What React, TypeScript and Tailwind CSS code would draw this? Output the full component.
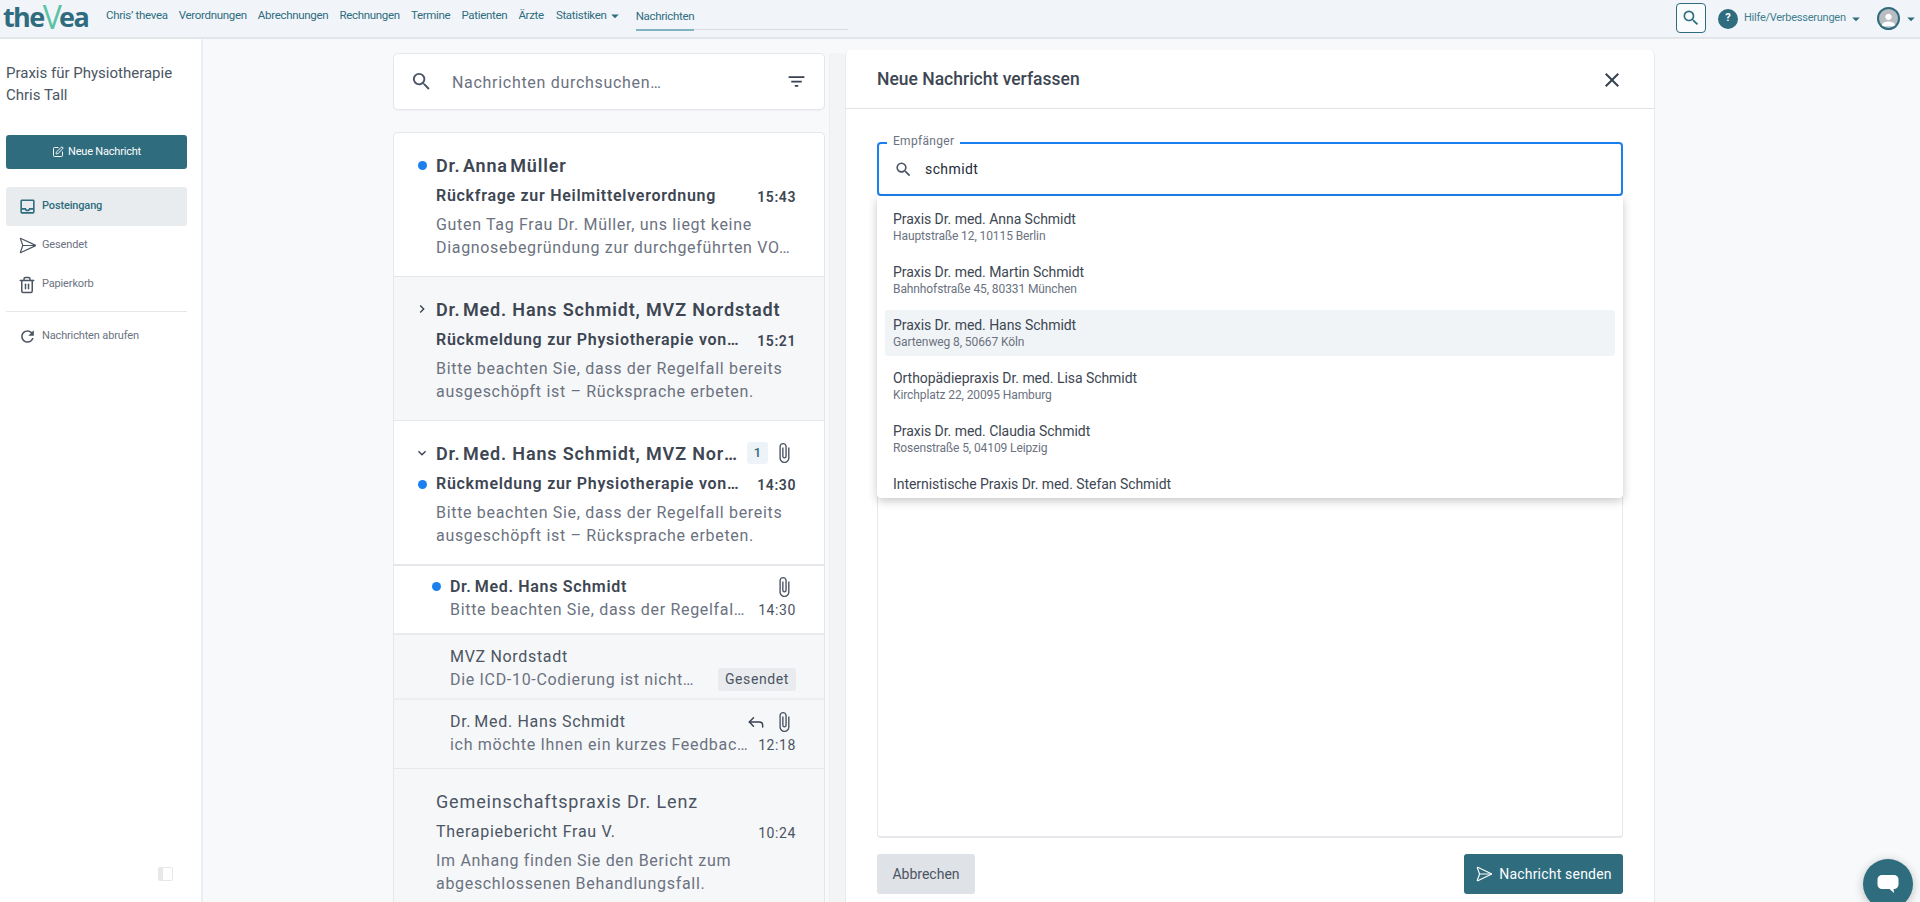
import React from "react";
import {
  MdSearch,
  MdFilterList,
  MdClose,
  MdAttachFile,
  MdOutlineInbox,
  MdKeyboardArrowDown,
  MdKeyboardArrowRight,
  MdArrowDropDown,
  MdRefresh,
  MdPerson,
} from "react-icons/md";
import { Reply, SendHorizontal, SquarePen, Trash2 } from "lucide-react";

const navItems = ["Chris’ thevea", "Verordnungen", "Abrechnungen", "Rechnungen", "Termine", "Patienten", "Ärzte"];

const recipients = [
  { name: "Praxis Dr. med. Anna Schmidt", address: "Hauptstraße 12, 10115 Berlin" },
  { name: "Praxis Dr. med. Martin Schmidt", address: "Bahnhofstraße 45, 80331 München" },
  { name: "Praxis Dr. med. Hans Schmidt", address: "Gartenweg 8, 50667 Köln", active: true },
  { name: "Orthopädiepraxis Dr. med. Lisa Schmidt", address: "Kirchplatz 22, 20095 Hamburg" },
  { name: "Praxis Dr. med. Claudia Schmidt", address: "Rosenstraße 5, 04109 Leipzig" },
  { name: "Internistische Praxis Dr. med. Stefan Schmidt" },
];

const Dot = () => <span className="block w-[9px] h-[9px] rounded-full bg-[#1a7fef] mx-auto" />;

const Clip = () => <MdAttachFile className="text-[22px] text-[#4b5563]" />;

const DrMed = () => <span className="[word-spacing:-3px]">Dr. Med.</span>;
const DrMedSmall = () => <span className="[word-spacing:-1.5px]">Dr. Med.</span>;

type ThreadProps = {
  lead?: React.ReactNode;
  subLead?: React.ReactNode;
  name: React.ReactNode;
  nameExtra?: React.ReactNode;
  subject: string;
  time: string;
  body: React.ReactNode;
  read?: boolean;
  className?: string;
};

const Thread = ({ lead, subLead, name, nameExtra, subject, time, body, read, className }: ThreadProps) => (
  <div className={`pt-5 pb-[17px] pr-7 border-b border-[#e5e7eb] ${className ?? ""}`}>
    <div className="flex items-center h-6">
      <div className="w-[42px] pl-5 shrink-0">
        <div className="w-4">{lead}</div>
      </div>
      <div
        className={`flex-1 min-w-0 truncate text-[18px] tracking-[0.85px] ${
          read ? "font-normal text-[#4b5563]" : "font-semibold text-[#3d4652]"
        }`}
      >
        {name}
      </div>
      {nameExtra}
    </div>
    <div className="flex items-center h-6 mt-[7px]">
      <div className="w-[42px] pl-5 shrink-0">
        <div className="w-4">{subLead}</div>
      </div>
      <div
        className={`flex-1 min-w-0 truncate text-[16px] tracking-[0.72px] ${
          read ? "font-normal text-[#4b5563]" : "font-semibold text-[#3d4652]"
        }`}
      >
        {subject}
      </div>
      <div
        className={`ml-4 text-[14px] tracking-[0.6px] mt-[3px] ${
          read ? "font-normal text-[#4b5563]" : "font-semibold text-[#3d4652]"
        }`}
      >
        {time}
      </div>
    </div>
    <div className="pl-[42px] mt-[5px] text-[16px] leading-[23px] tracking-[0.68px] text-[#6b7280]">{body}</div>
  </div>
);

type SubRowProps = {
  dot?: boolean;
  name: React.ReactNode;
  text: string;
  right: React.ReactNode;
  topRight?: React.ReactNode;
  className: string;
};

const SubRow = ({ dot, name, text, right, topRight, className }: SubRowProps) => (
  <div className={`pr-7 ${className}`}>
    <div className="flex items-center h-[23px]">
      <div className="w-[56px] pl-[34px] shrink-0">
        <div className="w-4">{dot && <Dot />}</div>
      </div>
      <div
        className={`flex-1 min-w-0 truncate text-[16px] tracking-[0.68px] ${
          dot ? "font-semibold text-[#3d4652]" : "text-[#4b5563]"
        }`}
      >
        {name}
      </div>
      {topRight}
    </div>
    <div className="flex items-center h-[23px]">
      <div className="flex-1 min-w-0 pl-[56px] truncate text-[16px] tracking-[0.68px] text-[#6b7280]">{text}</div>
      {right}
    </div>
  </div>
);

const App: React.FC = () => {
  return (
    <div className="h-[902px] overflow-hidden flex flex-col bg-[#f8f9fb] font-['Roboto',sans-serif] text-[#374151]">
      {/* top bar */}
      <header className="relative z-10 h-[39px] shrink-0 flex items-center bg-[#f1f5f9] border-b-2 border-[#e2e5e9] text-[#2e6c7e]">
        <div className="w-[106px] pl-[3px] shrink-0 flex items-center h-full font-['Open_Sans',sans-serif] font-bold text-[27px] tracking-[-1.6px] leading-none text-[#2e6c7e] pb-1">
          the<span className="text-[#5cc2a6] font-normal text-[32px] -mx-px">V</span>ea
        </div>
        <nav className="flex items-start h-full text-[11.5px] tracking-[-0.3px]">
          <div className="flex items-center gap-[11px] h-[30px] pt-[1px]">
            {navItems.map((item) => (
              <span key={item}>{item}</span>
            ))}
          </div>
          <div className="flex items-center ml-3 h-[38px] pt-px pb-[7px]">
            Statistiken
            <MdArrowDropDown className="text-[18px] -ml-px" />
          </div>
          <div className="flex items-center ml-[12px] h-[31px] pt-1 border-b-2 border-[#7fb4c0]">Nachrichten</div>
          <div className="w-[154px] h-[30px] border-b border-[#d9dde1]" />
        </nav>
        <div className="ml-auto flex items-center">
          <button className="w-[30px] h-[30px] flex items-center justify-center rounded-[4px] border border-[#2e6c7e] bg-white/60 mt-[-2px]">
            <MdSearch className="text-[20px]" />
          </button>
          <span className="ml-[12px] w-[20px] h-[20px] rounded-full bg-[#2e6c7e] text-white text-[11px] font-bold flex items-center justify-center">
            ?
          </span>
          <span className="ml-[6px] w-[103px] text-[11px] tracking-[-0.25px] text-[#3f7e8f] whitespace-nowrap">
            Hilfe/Verbesserungen
          </span>
          <MdArrowDropDown className="text-[18px]" />
          <span className="ml-[12px] w-[23px] h-[23px] rounded-full border-2 border-[#2e6c7e] bg-[#b9bdc2] flex items-end justify-center overflow-hidden">
            <MdPerson className="text-[20px] text-white translate-y-[2px]" />
          </span>
          <MdArrowDropDown className="ml-[2px] text-[18px]" />
        </div>
      </header>

      <div className="flex-1 min-h-0 flex">
        {/* sidebar */}
        <aside className="w-[203px] shrink-0 flex flex-col bg-white border-r-2 border-[#eceef1] pl-[6px] pr-[14px]">
          <div className="mt-[23px] text-[15px] leading-[22px] text-[#4b5563]">
            Praxis für Physiotherapie
            <br />
            Chris Tall
          </div>
          <button className="mt-[29px] h-[34px] rounded-[3px] bg-[#2e6c7e] text-white text-[11px] flex items-center justify-center gap-1 tracking-[-0.2px]">
            <SquarePen size={12} />
            Neue Nachricht
          </button>
          <div className="mt-[18px] h-[39px] rounded-[3px] bg-[#e9ecef] flex items-center pl-[12px] gap-[5px] text-[11px] tracking-[-0.15px] font-medium text-[#2e6c7e]">
            <MdOutlineInbox className="text-[19px]" />
            Posteingang
          </div>
          <div className="h-[39px] flex items-center pl-[12px] gap-[5px] text-[11px] tracking-[-0.15px] text-[#6b7280]">
            <SendHorizontal size={19} strokeWidth={1.5} className="text-[#4b5563]" />
            Gesendet
          </div>
          <div className="h-[39px] flex items-center pl-[12px] gap-[6px] text-[11px] tracking-[-0.15px] text-[#6b7280]">
            <Trash2 size={18} strokeWidth={2} className="text-[#4b5563]" />
            Papierkorb
          </div>
          <div className="mt-[7px] border-t border-[#e5e7eb]" />
          <div className="mt-[5px] h-[39px] flex items-center pl-[12px] gap-[5px] text-[11px] tracking-[-0.15px] text-[#6b7280]">
            <MdRefresh className="text-[19px] text-[#4b5563]" />
            Nachrichten abrufen
          </div>
          <div className="mt-auto mb-[21px] ml-[152px] w-[15px] h-[14px] rounded-[2px] bg-[#e7e8ea] flex justify-end">
            <span className="block w-[9px] h-[12px] mt-px mr-px bg-white rounded-[1px]" />
          </div>
        </aside>

        {/* message list */}
        <main className="flex-1 min-w-0 flex pl-[190px] pt-[12px]">
          <section className="w-[432px] shrink-0 pt-[2px]">
            <div className="h-[57px] flex items-center bg-white rounded-[5px] border border-[#e5e7eb] pl-[16px] pr-[17px] shadow-[0_1px_1px_rgba(0,0,0,0.04)]">
              <MdSearch className="text-[23px] text-[#4b5563]" />
              <span className="ml-[19px] text-[16px] tracking-[0.7px] text-[#6b7280] pt-[2px]">
                Nachrichten durchsuchen…
              </span>
              <MdFilterList className="ml-auto text-[21px] text-[#374151]" />
            </div>
            <div className="mt-[22px] bg-white rounded-t-[5px] border border-[#e5e7eb] border-b-0">
              <Thread
                lead={<Dot />}
                name={<span className="[word-spacing:-3px]">Dr. Anna Müller</span>}
                subject="Rückfrage zur Heilmittelverordnung"
                time="15:43"
                body={
                  <>
                    Guten Tag Frau Dr. Müller, uns liegt keine
                    <br />
                    Diagnosebegründung zur durchgeführten VO…
                  </>
                }
              />
              <Thread
                className="bg-[#f6f7f9]"
                lead={<MdKeyboardArrowRight className="text-[16px] text-[#374151]" />}
                name={
                  <>
                    <DrMed /> Hans Schmidt, MVZ Nordstadt
                  </>
                }
                subject="Rückmeldung zur Physiotherapie von Frau K."
                time="15:21"
                body={
                  <>
                    Bitte beachten Sie, dass der Regelfall bereits
                    <br />
                    ausgeschöpft ist – Rücksprache erbeten.
                  </>
                }
              />
              <Thread
                className="border-b-2"
                lead={<MdKeyboardArrowDown className="text-[16px] text-[#374151]" />}
                subLead={<Dot />}
                name={
                  <>
                    <DrMed /> Hans Schmidt, MVZ Nordstadt
                  </>
                }
                nameExtra={
                  <div className="flex items-center ml-2 mr-[1px]">
                    <span className="w-[21px] h-[22px] rounded-[3px] bg-[#eef3f7] flex items-center justify-center text-[13px] font-medium text-[#2e6c7e]">
                      1
                    </span>
                    <span className="ml-[5px]">
                      <Clip />
                    </span>
                  </div>
                }
                subject="Rückmeldung zur Physiotherapie von Frau K."
                time="14:30"
                body={
                  <>
                    Bitte beachten Sie, dass der Regelfall bereits
                    <br />
                    ausgeschöpft ist – Rücksprache erbeten.
                  </>
                }
              />
              <SubRow
                className="pt-[9px] h-[69px] border-b-2 border-[#e9ebee]"
                dot
                name={
                  <>
                    <DrMedSmall /> Hans Schmidt
                  </>
                }
                text="Bitte beachten Sie, dass der Regelfall bereits ausgeschöpft"
                topRight={
                  <span className="mr-[1px]">
                    <Clip />
                  </span>
                }
                right={<span className="ml-[10px] text-[14px] tracking-[0.6px] text-[#4b5563] mt-0.5">14:30</span>}
              />
              <SubRow
                className="pt-[10px] h-[65px] bg-[#f6f7f9] border-b-2 border-[#eceef1]"
                name="MVZ Nordstadt"
                text="Die ICD-10-Codierung ist nicht korrekt angegeben"
                right={
                  <span className="ml-5 h-[23px] px-[7px] rounded-[3px] bg-[#e9ebee] flex items-center text-[14px] tracking-[0.6px] text-[#4b5563]">
                    Gesendet
                  </span>
                }
              />
              <SubRow
                className="pt-[10px] h-[69px] bg-[#f6f7f9] border-b border-[#e5e7eb]"
                name={
                  <>
                    <DrMedSmall /> Hans Schmidt
                  </>
                }
                text="ich möchte Ihnen ein kurzes Feedback zur Therapie geben"
                topRight={
                  <div className="flex items-center gap-[7px] mr-[1px]">
                    <Reply size={20} strokeWidth={1.75} className="text-[#374151]" />
                    <Clip />
                  </div>
                }
                right={<span className="ml-[10px] text-[14px] tracking-[0.6px] text-[#4b5563] mt-0.5">12:18</span>}
              />
              <Thread
                className="bg-[#f6f7f9]"
                read
                name="Gemeinschaftspraxis Dr. Lenz"
                subject="Therapiebericht Frau V."
                time="10:24"
                body={
                  <>
                    Im Anhang finden Sie den Bericht zum
                    <br />
                    abgeschlossenen Behandlungsfall.
                  </>
                }
              />
            </div>
          </section>

          <div className="w-[16px] ml-[4px] mt-[2px] rounded-t-[4px] bg-[#f3f4f6] border-l border-[#eceef1] shrink-0" />

          {/* compose panel */}
          <section className="w-[810px] shrink-0 -mt-px flex flex-col bg-white rounded-t-[5px] border-x border-[#e8eaed]">
            <div className="h-[59px] shrink-0 flex items-center justify-between pl-[31px] pr-[30px] pt-px border-b border-[#dfe2e6]">
              <h2 className="text-[17.5px] font-medium text-[#3d4652]">Neue Nachricht verfassen</h2>
              <MdClose className="text-[24px] text-[#374151]" />
            </div>
            <div className="flex-1 min-h-0 flex flex-col px-[31px] pt-[33px] pb-[8px]">
              <div className="relative">
                <div className="h-[54px] flex items-center rounded-[4px] border-2 border-[#1a7fef] pl-[15px]">
                  <MdSearch className="text-[19px] text-[#4b5563]" />
                  <span className="ml-[12px] text-[14px] tracking-[0.4px] text-[#1f2937]">schmidt</span>
                </div>
                <span className="absolute left-[10px] -top-[9px] px-[6px] bg-white text-[12px] leading-4 tracking-[0.3px] text-[#6b7280]">
                  Empfänger
                </span>
                <div className="absolute z-20 top-[54px] left-0 right-0 h-[302px] overflow-hidden bg-white rounded-b-[4px] shadow-[0_3px_10px_rgba(0,0,0,0.22)] pt-[8px]">
                  {recipients.map((r) => (
                    <div
                      key={r.name}
                      className={`mx-2 h-[46px] mb-[7px] px-2 pt-[6px] rounded-[3px] ${r.active ? "bg-[#f1f4f7]" : ""}`}
                    >
                      <div className="text-[14px] leading-[18px] text-[#3d4652] tracking-[-0.05px]">{r.name}</div>
                      {r.address && (
                        <div className="text-[12px] leading-[16px] text-[#6b7280] tracking-[-0.1px]">{r.address}</div>
                      )}
                    </div>
                  ))}
                </div>
              </div>
              <div className="mt-[19px] flex-1 min-h-0 rounded-[4px] border border-[#e5e7eb] border-b-2" />
              <div className="mt-[16px] flex items-center justify-between">
                <button className="w-[98px] h-[40px] rounded-[3px] bg-[#dfe2e6] text-[14px] text-[#4b5563]">
                  Abbrechen
                </button>
                <button className="w-[159px] h-[40px] rounded-[3px] bg-[#2e6c7e] text-white text-[14px] flex items-center justify-center gap-[6px] tracking-[0.2px]">
                  <SendHorizontal size={18} strokeWidth={1.5} />
                  Nachricht senden
                </button>
              </div>
            </div>
          </section>

          {/* chat launcher */}
          <button className="absolute z-30 left-[1863px] top-[859px] w-[50px] h-[50px] rounded-full bg-[#2e6c7e] shadow-[0_2px_10px_rgba(0,0,0,0.25)] flex items-center justify-center">
            <svg width="24" height="24" viewBox="0 0 24 24" fill="white">
              <path d="M6 3h12a4.5 4.5 0 0 1 4.5 4.5v5A4.5 4.5 0 0 1 18 17h-.5l.6 4-4.6-4H6a4.5 4.5 0 0 1-4.5-4.5v-5A4.5 4.5 0 0 1 6 3z" />
            </svg>
          </button>
        </main>
      </div>
    </div>
  );
};

export default App;
